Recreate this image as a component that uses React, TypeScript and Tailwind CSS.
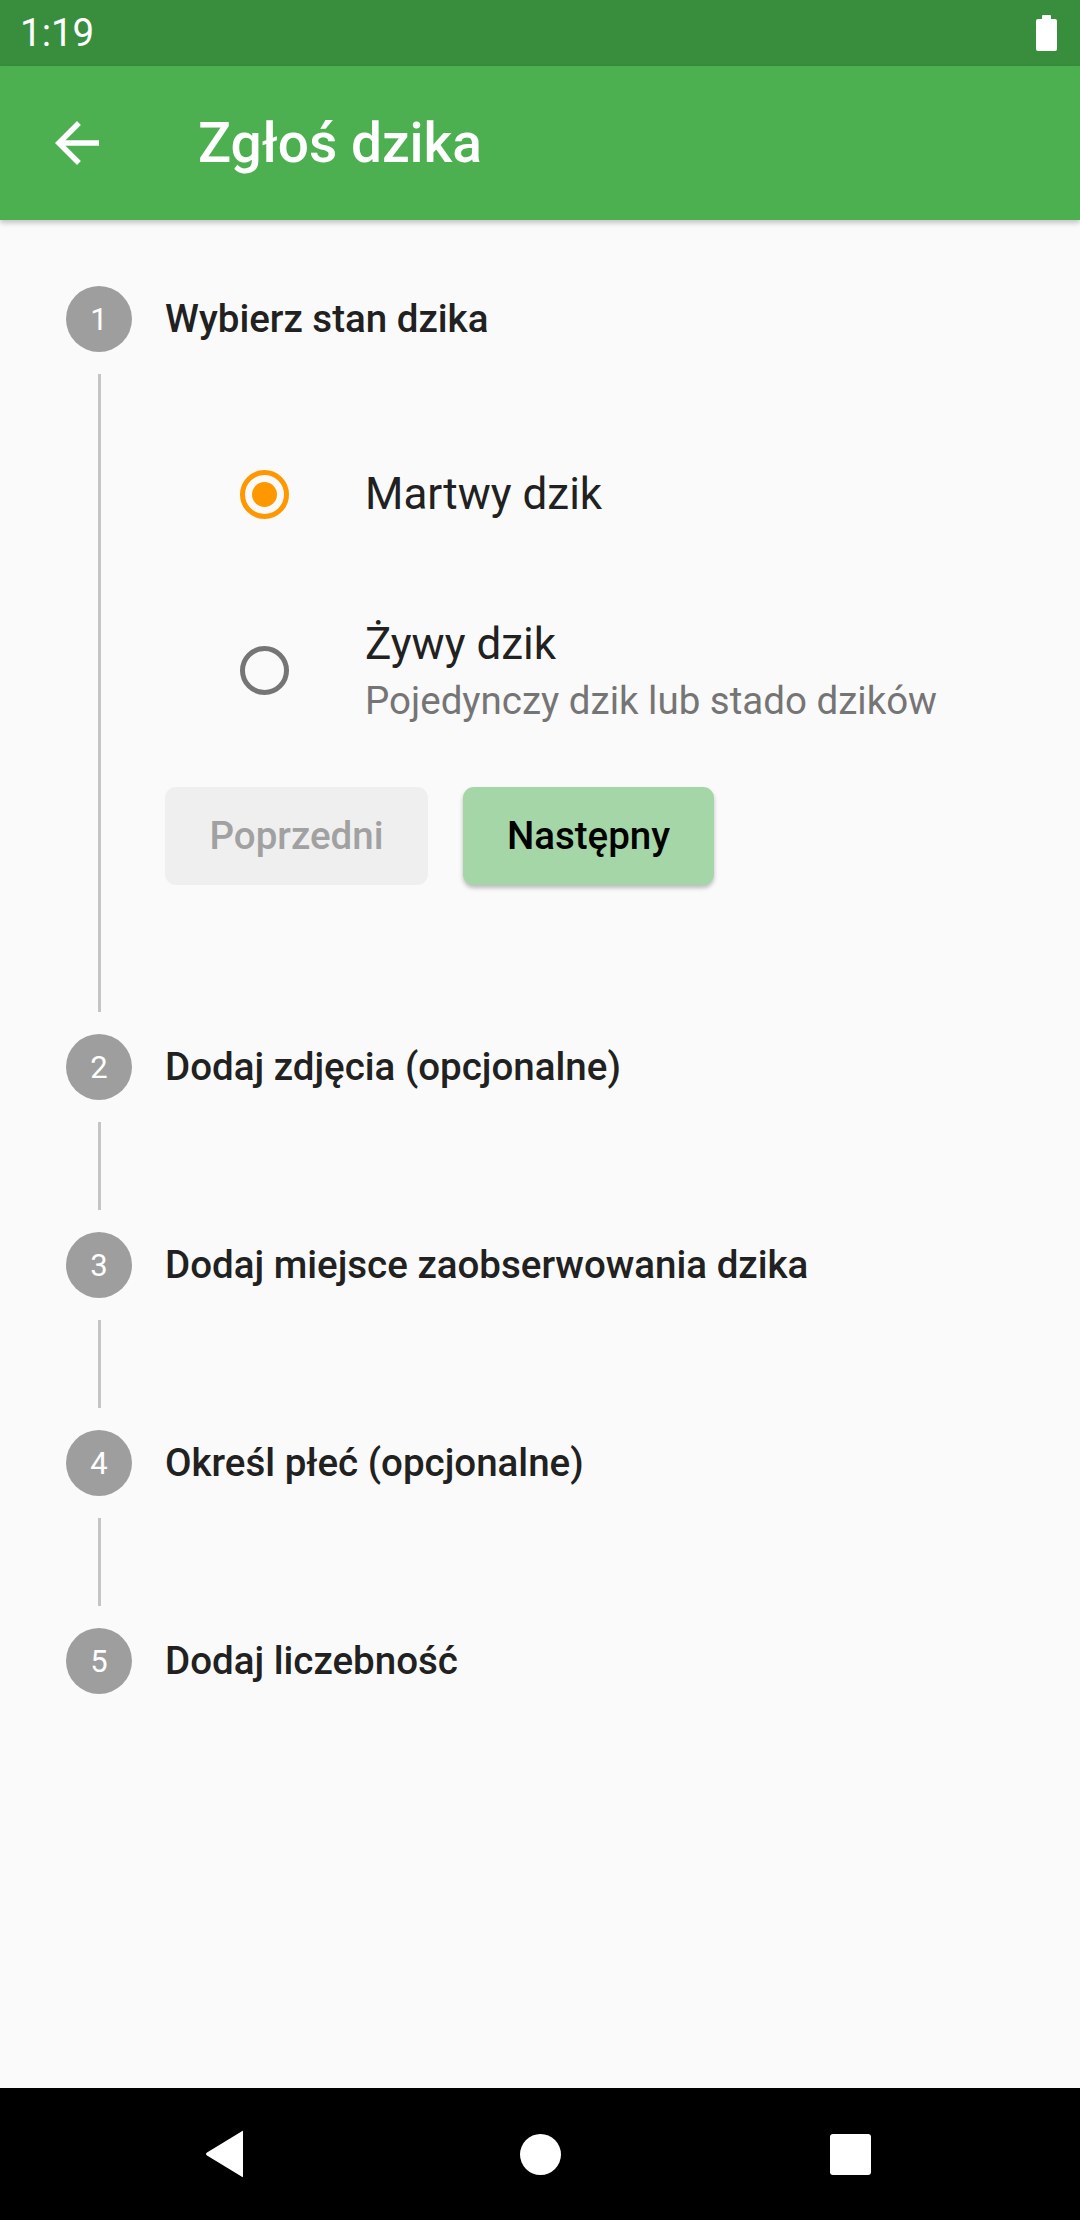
import React from "react";

const steps = [
  "Wybierz stan dzika",
  "Dodaj zdjęcia (opcjonalne)",
  "Dodaj miejsce zaobserwowania dzika",
  "Określ płeć (opcjonalne)",
  "Dodaj liczebność",
];

function StepHeader({ n, title }: { n: number; title: string }) {
  return (
    <div className="flex h-[110px] items-center px-[66px]">
      <div className="flex h-[66px] w-[66px] shrink-0 items-center justify-center rounded-full bg-[#9e9e9e]">
        <span className="text-[31px] leading-none text-white">{n}</span>
      </div>
      <span className="ml-[33px] text-[38.5px] font-medium leading-[46px] text-[#212121]">
        {title}
      </span>
    </div>
  );
}

function Line() {
  return (
    <div className="flex w-[66px] shrink-0 justify-center">
      <div className="w-[3px] bg-[#c4c4c4]" />
    </div>
  );
}

export default function App() {
  return (
    <div className="flex h-[2220px] w-[1080px] flex-col overflow-hidden bg-[#fafafa] font-['Roboto',sans-serif]">
      {/* status bar */}
      <div className="flex h-[66px] shrink-0 items-center justify-between bg-[#388e3c] pl-[20px] pr-[22px]">
        <span className="text-[38.5px] leading-none text-white">1:19</span>
        <svg width="22" height="37" viewBox="0 0 22 37">
          <rect x="6" y="0" width="9" height="5" rx="1" fill="#fff" />
          <rect x="0" y="4" width="21" height="32" rx="2" fill="#fff" />
        </svg>
      </div>

      {/* app bar */}
      <div className="relative z-10 flex h-[154px] shrink-0 items-center bg-[#4caf50] shadow-[0_3px_5px_rgba(0,0,0,0.22)]">
        <svg className="ml-[44px]" width="66" height="66" viewBox="0 0 24 24">
          <path
            d="M20 11H7.83l5.59-5.59L12 4l-8 8 8 8 1.41-1.41L7.83 13H20v-2z"
            fill="#fff"
          />
        </svg>
        <span className="ml-[88px] text-[55px] font-medium leading-none text-white">
          Zgłoś dzika
        </span>
      </div>

      {/* content */}
      <div className="flex-1 pt-[44px]">
        {/* step 1 */}
        <StepHeader n={1} title={steps[0]} />
        <div className="flex px-[66px]">
          <Line />
          <div className="ml-[33px] flex flex-1 flex-col pt-[43px] pb-[127px]">
            {/* tile 1 */}
            <div className="flex h-[154px] items-center pl-[44px]">
              <div className="flex w-[110px] shrink-0 justify-center">
                <div className="flex h-[49px] w-[49px] items-center justify-center rounded-full border-[5.5px] border-[#ff9800]">
                  <div className="h-[25px] w-[25px] rounded-full bg-[#ff9800]" />
                </div>
              </div>
              <span className="ml-[46px] text-[44px] leading-[52px] text-[#212121]">
                Martwy dzik
              </span>
            </div>
            {/* tile 2 */}
            <div className="flex h-[198px] items-center pl-[44px]">
              <div className="flex w-[110px] shrink-0 justify-center">
                <div className="h-[49px] w-[49px] rounded-full border-[5.5px] border-[#757575]" />
              </div>
              <div className="ml-[46px] flex flex-col">
                <span className="text-[44px] leading-[52px] text-[#212121]">
                  Żywy dzik
                </span>
                <span className="mt-[8px] text-[38.5px] leading-[45px] text-[#757575]">
                  Pojedynczy dzik lub stado dzików
                </span>
              </div>
            </div>
            {/* buttons */}
            <div className="mt-[18px] flex gap-[35px]">
              <div className="flex h-[98px] w-[263px] items-center justify-center rounded-[11px] bg-[#efefef]">
                <span className="text-[38.5px] font-medium text-[#a1a1a1]">Poprzedni</span>
              </div>
              <div className="flex h-[98px] w-[251px] items-center justify-center rounded-[11px] bg-[#a5d6a7] shadow-[0_3px_4px_rgba(0,0,0,0.25)]">
                <span className="text-[38.5px] font-medium text-black">Następny</span>
              </div>
            </div>
          </div>
        </div>

        {steps.slice(1).map((t, i) => (
          <div key={t}>
            <StepHeader n={i + 2} title={t} />
            {i < 3 && (
              <div className="flex h-[88px] px-[66px]">
                <Line />
              </div>
            )}
          </div>
        ))}
      </div>

      {/* nav bar */}
      <div className="flex h-[132px] shrink-0 items-center bg-black pl-[180px]">
        <div className="flex w-[90px] justify-center">
          <svg width="40" height="48" viewBox="0 0 40 48">
            <path
              d="M38 2 L38 46 Q38 48 36.5 46.5 L2 25.5 Q0 24 2 22.5 L36.5 1.5 Q38 0 38 2 Z"
              fill="#fff"
            />
          </svg>
        </div>
        <div className="ml-[225px] flex w-[90px] justify-center">
          <div className="h-[41px] w-[41px] rounded-full bg-white" />
        </div>
        <div className="ml-[220px] flex w-[90px] justify-center">
          <div className="h-[41px] w-[41px] rounded-[3px] bg-white" />
        </div>
      </div>
    </div>
  );
}
